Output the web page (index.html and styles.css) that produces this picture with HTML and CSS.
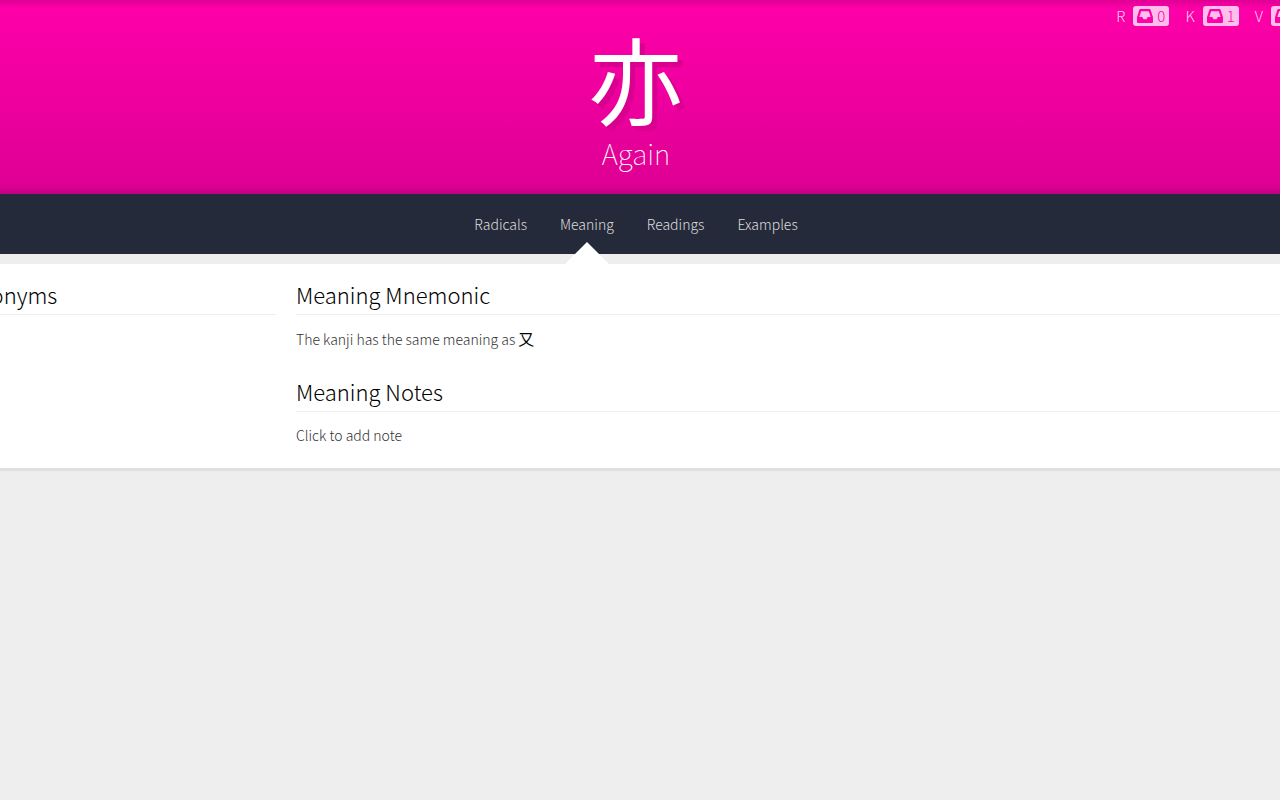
FILE: index.html
```html
<!DOCTYPE html>
<html lang="ja">
<head>
  <meta charset="UTF-8">
  <meta name="viewport" content="width=device-width, initial-scale=1.0">
  <title>Again</title>
  <link rel="stylesheet" href="styles.css">
</head>
<body>
  <svg width="0" height="0" class="sprite">
    <symbol id="inbox" viewBox="0 0 16 14">
      <path fill-rule="evenodd" d="M3.6 0h8.8q1 0 1.3 1L16 8.200v4.800q0 1-1 1H1q-1 0-1-1V8.200L2.300 1q.3-1 1.300-1zM4.200 2.200L2.300 8h3l1.200 2.300h3L10.700 8h3l-1.900-5.800z"/>
    </symbol>
  </svg>

  <header class="main-info">
    <ul class="stats">
      <li>R <span class="count"><svg class="icon"><use href="#inbox"/></svg>0</span></li>
      <li>K <span class="count"><svg class="icon"><use href="#inbox"/></svg>1</span></li>
      <li>V <span class="count"><svg class="icon"><use href="#inbox"/></svg>0</span></li>
    </ul>
    <h1 class="character">亦</h1>
    <p class="meaning">Again</p>
  </header>

  <nav class="tabs">
    <a href="#radicals">Radicals</a>
    <a href="#meaning" class="active">Meaning</a>
    <a href="#readings">Readings</a>
    <a href="#examples">Examples</a>
  </nav>

  <main class="info" id="meaning">
    <section class="col-side">
      <h2>User Synonyms</h2>
    </section>
    <section class="col-main">
      <h2>Meaning Mnemonic</h2>
      <p>The kanji has the same meaning as <b>又</b></p>
      <h2>Meaning Notes</h2>
      <p>Click to add note</p>
    </section>
  </main>
</body>
</html>
```
FILE: styles.css
```css
* {
  box-sizing: border-box;
}

body {
  margin: 0;
  overflow-x: hidden;
  background-color: #eee;
  color: #333;
  font-family: "Noto Sans CJK JP", sans-serif;
  font-size: 14px;
  font-weight: 300;
  line-height: 20px;
}

h1, h2, p, ul {
  margin: 0;
  padding: 0;
}

.sprite {
  display: block;
}

/* Header */
.main-info {
  padding: 6px 8px 24px 0;
  color: #fff;
  text-align: center;
  background-image: linear-gradient(to bottom, #ff00aa, #dd0093);
  box-shadow: inset 0 10px 8px -8px rgba(0, 0, 0, 0.2), inset 0 -10px 8px -8px rgba(0, 0, 0, 0.2);
}

.stats {
  display: flex;
  justify-content: flex-end;
  gap: 16px;
  margin-right: -35px;
  list-style: none;
  color: rgba(255, 255, 255, 0.8);
  font-size: 15px;
}

.stats li {
  display: flex;
  gap: 8px;
}

.count {
  display: flex;
  align-items: center;
  gap: 4px;
  width: 36px;
  padding: 0 4px;
  border-radius: 3px;
  background-color: #ffbfea;
  color: #ff00aa;
}

.icon {
  width: 16px;
  height: 14px;
  fill: currentColor;
}

.character {
  margin-bottom: 8px;
  font-size: 94px;
  font-weight: 400;
  line-height: 102px;
  text-shadow: 5px 5px 0 #d9008f;
}

.meaning {
  font-size: 28px;
  font-weight: 100;
  line-height: 34px;
}

/* Tabs */
.tabs {
  display: flex;
  justify-content: center;
  gap: 33px;
  height: 60px;
  padding-right: 8px;
  background-color: #252a3a;
  line-height: 60px;
}

.tabs a {
  position: relative;
  color: #ddd;
  text-decoration: none;
}

.tabs .active::after {
  content: "";
  position: absolute;
  top: 48px;
  left: 50%;
  margin-left: -22px;
  border: 22px solid transparent;
  border-top: 0;
  border-bottom-color: #fff;
}

/* Content */
.info {
  display: flex;
  gap: 20px;
  margin-top: 10px;
  padding: 16px 0 23px;
  border-bottom: 3px solid #e0e0e0;
  background-color: #fff;
}

.col-side {
  flex: 0 0 372px;
  margin-left: -96px;
}

.col-main {
  flex: 1;
}

.info h2 {
  margin-bottom: 13px;
  padding-bottom: 6px;
  border-bottom: 1px solid #eee;
  color: #000;
  font-size: 22px;
  font-weight: 300;
  line-height: 28px;
}

.info p + h2 {
  margin-top: 28px;
}

.info b {
  color: #000;
  font-size: 16px;
  font-weight: 400;
}
```
